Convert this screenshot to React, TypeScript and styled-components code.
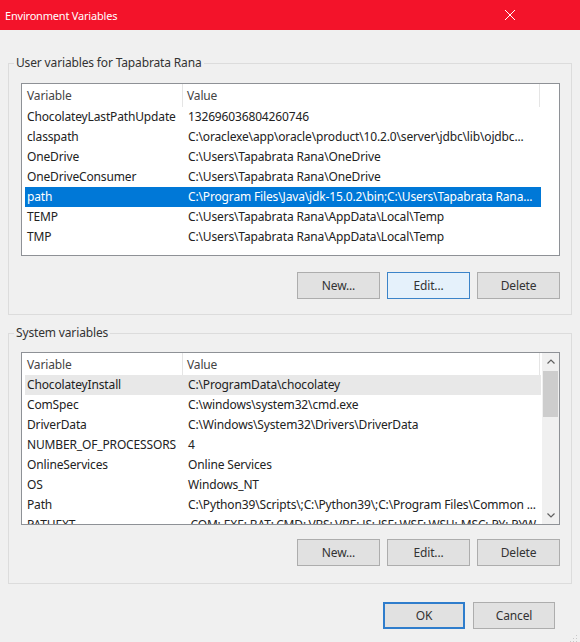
import React from "react";
import styled, { createGlobalStyle, css } from "styled-components";

const GlobalStyle = createGlobalStyle`
  html, body {
    margin: 0;
    padding: 0;
    background: #f0f0f0;
  }
  body {
    font-family: "Noto Sans", "Open Sans", "Liberation Sans", sans-serif;
    font-size: 12px;
    letter-spacing: -0.15px;
    color: #222;
  }
  * { box-sizing: border-box; }
`;

const Window = styled.div`
  position: relative;
  width: 580px;
  height: 642px;
  background: #f0f0f0;
  display: flex;
  flex-direction: column;
  overflow: hidden;
`;

const TitleBar = styled.div`
  height: 30px;
  flex: 0 0 30px;
  background: #f3132a;
  color: #fff;
  display: flex;
  align-items: center;
  justify-content: space-between;
  padding-left: 5px;
`;

const TitleText = styled.span`
  font-size: 11px;
  letter-spacing: -0.2px;
`;

const CloseButton = styled.div`
  width: 46px;
  height: 30px;
  margin-right: 47px;
  display: flex;
  align-items: center;
  justify-content: center;
`;

const Body = styled.div`
  display: flex;
  flex-direction: column;
  padding: 25px 8px 0;
`;

const Group = styled.fieldset<{ $padTop: number; $padBottom: number; $gap?: number }>`
  margin: 0;
  margin-top: ${(p) => p.$gap ?? 0}px;
  min-width: 0;
  border: 1px solid #dcdcdc;
  padding: ${(p) => p.$padTop}px 11px ${(p) => p.$padBottom}px 12px;
  display: flex;
  flex-direction: column;
`;

const Legend = styled.legend`
  margin-left: -7px;
  padding: 0 2px;
  line-height: 16px;
  font-size: 12px;
  color: #333;
`;

const ListView = styled.div`
  height: 173px;
  border: 1px solid #8e9196;
  background: #fff;
  display: flex;
  overflow: hidden;
`;

const ListContent = styled.div`
  flex: 1;
  min-width: 0;
  display: flex;
  flex-direction: column;
  overflow: hidden;
`;

const HeaderRow = styled.div<{ $h: number }>`
  height: ${(p) => p.$h}px;
  flex: 0 0 ${(p) => p.$h}px;
  display: grid;
  grid-template-columns: 161px 357px 1fr;
  align-items: center;
  color: #444;
`;

const HeaderCell = styled.div<{ $pad: number; $divider?: boolean }>`
  height: 100%;
  display: flex;
  align-items: center;
  padding-left: ${(p) => p.$pad}px;
  white-space: nowrap;
  overflow: hidden;
  ${(p) =>
    p.$divider &&
    css`
      border-right: 1px solid #e5e5e5;
    `}
`;

const Row = styled.div<{ $state?: "selected" | "hover" }>`
  height: 20px;
  flex: 0 0 20px;
  width: 516px;
  margin-left: 3px;
  display: grid;
  grid-template-columns: 158px 358px;
  line-height: 20px;
  color: #222;
  ${(p) =>
    p.$state === "selected" &&
    css`
      background: #0078d7;
      color: #fff;
    `}
  ${(p) =>
    p.$state === "hover" &&
    css`
      background: #e8e8e8;
    `}
`;

const NameCell = styled.div`
  padding-left: 2px;
  white-space: nowrap;
  overflow: visible;
`;

const ValueCell = styled.div`
  padding-left: 5px;
  white-space: nowrap;
  overflow: hidden;
  text-overflow: ellipsis;
`;

const ScrollBar = styled.div`
  width: 17px;
  flex: 0 0 17px;
  background: #f0f0f0;
  display: flex;
  flex-direction: column;
`;

const ScrollArrow = styled.div`
  height: 17px;
  flex: 0 0 17px;
  display: flex;
  align-items: center;
  justify-content: center;
`;

const ScrollTrack = styled.div`
  flex: 1;
  display: flex;
  flex-direction: column;
  padding: 1px 1px 0;
`;

const ScrollThumb = styled.div`
  height: 46px;
  background: #cdcdcd;
`;

const ButtonRow = styled.div<{ $gapTop: number }>`
  margin-top: ${(p) => p.$gapTop}px;
  display: flex;
  justify-content: flex-end;
  gap: 7px;
`;

const Button = styled.button<{ $variant?: "hot" | "default"; $w?: number }>`
  width: ${(p) => p.$w ?? 83}px;
  height: 27px;
  padding: 0;
  font-family: inherit;
  font-size: 12px;
  letter-spacing: inherit;
  color: #333;
  background: #e1e1e1;
  border: 1px solid #adadad;
  border-radius: 0;
  ${(p) =>
    p.$variant === "hot" &&
    css`
      background: #e5f1fb;
      border-color: #3c84c9;
    `}
  ${(p) =>
    p.$variant === "default" &&
    css`
      border: 2px solid #2f7dcc;
    `}
`;

const Footer = styled.div`
  margin-top: 18px;
  display: flex;
  justify-content: flex-end;
  gap: 8px;
  padding-right: 17px;
`;

const Grip = styled.div`
  position: absolute;
  right: 2px;
  bottom: 2px;
  width: 10px;
  height: 10px;
`;

type Item = { name: string; value: string; state?: "selected" | "hover" };

const userVars: Item[] = [
  { name: "ChocolateyLastPathUpdate", value: "132696036804260746" },
  {
    name: "classpath",
    value: "C:\\oraclexe\\app\\oracle\\product\\10.2.0\\server\\jdbc\\lib\\ojdbc...",
  },
  { name: "OneDrive", value: "C:\\Users\\Tapabrata Rana\\OneDrive" },
  { name: "OneDriveConsumer", value: "C:\\Users\\Tapabrata Rana\\OneDrive" },
  {
    name: "path",
    value: "C:\\Program Files\\Java\\jdk-15.0.2\\bin;C:\\Users\\Tapabrata Rana...",
    state: "selected",
  },
  { name: "TEMP", value: "C:\\Users\\Tapabrata Rana\\AppData\\Local\\Temp" },
  { name: "TMP", value: "C:\\Users\\Tapabrata Rana\\AppData\\Local\\Temp" },
];

const systemVars: Item[] = [
  { name: "ChocolateyInstall", value: "C:\\ProgramData\\chocolatey", state: "hover" },
  { name: "ComSpec", value: "C:\\windows\\system32\\cmd.exe" },
  { name: "DriverData", value: "C:\\Windows\\System32\\Drivers\\DriverData" },
  { name: "NUMBER_OF_PROCESSORS", value: "4" },
  { name: "OnlineServices", value: "Online Services" },
  { name: "OS", value: "Windows_NT" },
  {
    name: "Path",
    value: "C:\\Python39\\Scripts\\;C:\\Python39\\;C:\\Program Files\\Common ...",
  },
  {
    name: "PATHEXT",
    value: ".COM;.EXE;.BAT;.CMD;.VBS;.VBE;.JS;.JSE;.WSF;.WSH;.MSC;.PY;.PYW",
  },
];

const Chevron = ({ up }: { up: boolean }) => (
  <svg width="8" height="5" viewBox="0 0 8 5">
    <path
      d={up ? "M0.5 4.5 L4 1 L7.5 4.5" : "M0.5 0.5 L4 4 L7.5 0.5"}
      fill="none"
      stroke="#606060"
      strokeWidth="1.2"
    />
  </svg>
);

const VarList = ({
  items,
  scroll,
  headerHeight,
}: {
  items: Item[];
  scroll?: boolean;
  headerHeight: number;
}) => (
  <ListView>
    <ListContent>
      <HeaderRow $h={headerHeight}>
        <HeaderCell $pad={5} $divider>
          Variable
        </HeaderCell>
        <HeaderCell $pad={4} $divider>
          Value
        </HeaderCell>
        <HeaderCell $pad={0} />
      </HeaderRow>
      {items.map((it) => (
        <Row key={it.name} $state={it.state}>
          <NameCell>{it.name}</NameCell>
          <ValueCell>{it.value}</ValueCell>
        </Row>
      ))}
    </ListContent>
    {scroll && (
      <ScrollBar>
        <ScrollArrow>
          <Chevron up />
        </ScrollArrow>
        <ScrollTrack>
          <ScrollThumb />
        </ScrollTrack>
        <ScrollArrow>
          <Chevron up={false} />
        </ScrollArrow>
      </ScrollBar>
    )}
  </ListView>
);

export default function App() {
  return (
    <>
      <GlobalStyle />
      <Window>
        <TitleBar>
          <TitleText>Environment Variables</TitleText>
          <CloseButton>
            <svg width="10" height="10" viewBox="0 0 10 10">
              <path d="M0 0 L10 10 M10 0 L0 10" stroke="#fff" strokeWidth="1" />
            </svg>
          </CloseButton>
        </TitleBar>
        <Body>
          <Group $padTop={12} $padBottom={15}>
            <Legend>User variables for Tapabrata Rana</Legend>
            <VarList items={userVars} headerHeight={23} />
            <ButtonRow $gapTop={16}>
              <Button>New...</Button>
              <Button $variant="hot">Edit...</Button>
              <Button>Delete</Button>
            </ButtonRow>
          </Group>
          <Group $padTop={11} $padBottom={17} $gap={10}>
            <Legend>System variables</Legend>
            <VarList items={systemVars} scroll headerHeight={22} />
            <ButtonRow $gapTop={14}>
              <Button>New...</Button>
              <Button>Edit...</Button>
              <Button>Delete</Button>
            </ButtonRow>
          </Group>
          <Footer>
            <Button $variant="default" $w={82}>
              OK
            </Button>
            <Button $w={82}>Cancel</Button>
          </Footer>
        </Body>
        <Grip>
          <svg width="10" height="10" viewBox="0 0 10 10">
            <g fill="#c8c8c8">
              <rect x="8" y="2" width="1" height="1" />
              <rect x="5" y="5" width="1" height="1" />
              <rect x="8" y="5" width="1" height="1" />
              <rect x="2" y="8" width="1" height="1" />
              <rect x="5" y="8" width="1" height="1" />
              <rect x="8" y="8" width="1" height="1" />
            </g>
          </svg>
        </Grip>
      </Window>
    </>
  );
}
